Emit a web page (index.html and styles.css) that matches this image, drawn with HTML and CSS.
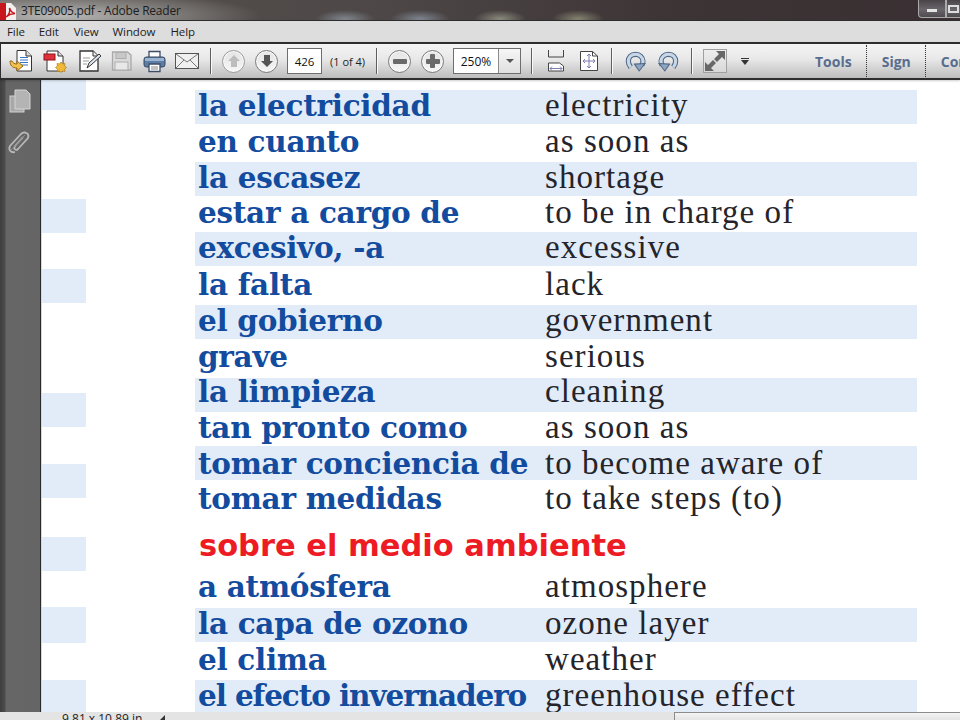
FILE: index.html
```html
<!DOCTYPE html>
<html lang="en">
<head>
<meta charset="utf-8">
<title>3TE09005.pdf - Adobe Reader</title>
<link rel="stylesheet" href="styles.css">
</head>
<body>
<div class="app">
  <header class="titlebar">
    <svg class="pdf-logo" width="16" height="18" viewBox="0 0 16 18"><path d="M0 1h11l5 5v12H0z" fill="#f4f0ee"/><path d="M0 1h6v17H0z" fill="#c8141c"/><path d="M6 15c3-2 4-6 3.500-9 1 3 2.500 5 5.500 5.500-3 0-6 1-9 3.500z" fill="none" stroke="#c8141c" stroke-width="1.400"/></svg>
    <span class="title-text">3TE09005.pdf - Adobe Reader</span>
    <div class="winbtns">
      <span class="winbtn"><i class="min-glyph"></i></span>
      <span class="winbtn"><i class="max-glyph"></i></span>
    </div>
  </header>
  <nav class="menubar">
    <span class="m-file">File</span><span class="m-edit">Edit</span><span class="m-view">View</span><span class="m-window">Window</span><span class="m-help">Help</span>
  </nav>
  <div class="toolbar">
    <svg class="ico i-open" width="24" height="24" viewBox="0 0 24 24"><path d="M8 1.500h9l5.500 5.500v15H8z" fill="#fff" stroke="#333"/><path d="M17 1.500V7h5.500" fill="#ddd" stroke="#333"/><path d="M11 8.500h8M11 11h8M11 13.500h8M11 16h8" stroke="#3a74c4" stroke-width="1.200"/><path d="M1 12c0 4 2 7 7 7v3l6-5-6-5v3c-3 0-4-1-5-3z" fill="#f2c24e" stroke="#9a6a10"/></svg>
    <svg class="ico i-create" width="24" height="24" viewBox="0 0 24 24"><path d="M4 2h11l5 5v15H4z" fill="#fff" stroke="#333"/><path d="M15 2v5h5" fill="#ddd" stroke="#333"/><rect x="1" y="5" width="11" height="6" fill="#e0303a" stroke="#8e1218"/><path d="M18 13l1.500 2 2.500-.5-.5 2.500 2 1.500-2 1.500.5 2.500-2.500-.5-1.500 1.500-1.500-1.500-2.500.5.500-2.500-2-1.500 2-1.500-.5-2.500 2.500.5z" fill="#f0b93a" stroke="#b07d12" stroke-width=".7"/></svg>
    <svg class="ico i-edit" width="24" height="24" viewBox="0 0 24 24"><path d="M2 2h13l5 5v15H2z" fill="#fff" stroke="#333" stroke-width="1.300"/><path d="M15 2v5h5" fill="#eee" stroke="#333"/><path d="M5 9h7M5 12h6M5 15h4" stroke="#999"/><path d="M9 19l2-5 10-9 2 2-10 9z" fill="#dfe6f2" stroke="#333"/></svg>
    <svg class="ico i-save" width="21" height="22" viewBox="0 0 21 22"><path d="M1.500 2h15l3.500 3v15H1.500z" fill="#dadada" stroke="#a9a9a9" stroke-width="1.300"/><rect x="5" y="2.500" width="10" height="6" fill="#c8c8c8" stroke="#adadad"/><rect x="4" y="12" width="13" height="8" fill="#e8e8e8" stroke="#adadad"/></svg>
    <svg class="ico i-print" width="23" height="23" viewBox="0 0 23 23"><path d="M6 1.500h11v7H6z" fill="#fff" stroke="#3c4e66" stroke-width="1.300"/><rect x="1" y="7" width="21" height="10" rx="2.500" fill="#5d7da6" stroke="#34465c"/><rect x="2" y="8" width="19" height="3" fill="#9bb4d1"/><path d="M6 14h11v7.500H6z" fill="#fff" stroke="#3c4e66" stroke-width="1.300"/><path d="M8 17h7M8 19h7" stroke="#888"/></svg>
    <svg class="ico i-mail" width="24" height="16" viewBox="0 0 24 16"><rect x=".5" y=".5" width="23" height="15" fill="#f0f0f0" stroke="#555"/><path d="M1 1l11 8 11-8M1 15l8-8M23 15l-8-8" fill="none" stroke="#777"/></svg>
    <i class="sep s-a"></i>
    <span class="circle c-up"><svg width="14" height="14" viewBox="0 0 14 14"><path d="M7 1l6 6H10v6H4V7H1z" fill="#bdbdbd"/></svg></span>
    <span class="circle c-down"><svg width="14" height="14" viewBox="0 0 14 14"><path d="M7 13L1 7h3V1h6v6h3z" fill="#555"/></svg></span>
    <span class="page-input">426</span>
    <span class="page-of">(1 of 4)</span>
    <i class="sep s-b"></i>
    <span class="circle c-minus"><i class="bar-h"></i></span>
    <span class="circle c-plus"><i class="bar-h"></i><i class="bar-v"></i></span>
    <div class="zoom-box"><span class="zoom-val">250%</span><span class="zoom-drop"><i class="tri"></i></span></div>
    <i class="sep s-c"></i>
    <svg class="ico i-fitw" width="18" height="22" viewBox="0 0 18 22"><path d="M1.500 0v7h15V0" fill="none" stroke="#444"/><path d="M1.500 21v-8h11l4 3v5z" fill="#fff" stroke="#444"/><path d="M3 18.500h12M3 18.500l2-2M3 18.500l2 2M15 18.500l-2-2M15 18.500l-2 2" stroke="#7a7fb0" fill="none"/></svg>
    <svg class="ico i-fitp" width="18" height="20" viewBox="0 0 18 20"><path d="M.5.500h12l5 4.500v14.500H.5z" fill="#fff" stroke="#444"/><path d="M12.500.500V5h5" fill="none" stroke="#444"/><path d="M9 3v14M3 10h12M9 3L7 5M9 3l2 2M9 17l-2-2M9 17l2-2M3 10l2-2M3 10l2 2M15 10l-2-2M15 10l-2 2" stroke="#7a7fb0" fill="none"/></svg>
    <i class="sep s-d"></i>
    <svg class="ico i-rot1" width="21" height="21" viewBox="0 0 20 20"><path d="M5.500 15.500C2.500 12 2.500 7.500 5 5s7.500-2.500 10 0 2.500 6 1 8.500" fill="none" stroke="#4f6786" stroke-width="5"/><path d="M5.500 15.500C2.500 12 2.500 7.500 5 5s7.500-2.500 10 0 2.500 6 1 8.500" fill="none" stroke="#c8d7e8" stroke-width="3"/><path d="M9 12.500l10-.5-5.500 7z" fill="#8ea6c3" stroke="#4f6786"/></svg>
    <svg class="ico i-rot2" width="21" height="21" viewBox="0 0 20 20"><path d="M14.500 15.500C17.500 12 17.500 7.500 15 5S7.500 2.500 5 5s-2.500 6-1 8.500" fill="none" stroke="#4f6786" stroke-width="5"/><path d="M14.500 15.500C17.500 12 17.500 7.500 15 5S7.500 2.500 5 5s-2.500 6-1 8.500" fill="none" stroke="#c8d7e8" stroke-width="3"/><path d="M11 12.500L1 12l5.500 7z" fill="#8ea6c3" stroke="#4f6786"/></svg>
    <i class="sep s-e"></i>
    <span class="expand"><svg width="22" height="22" viewBox="0 0 22 22"><path d="M12 1h9v9l-3-3-5 5-3-3 5-5zM10 21H1v-9l3 3 5-5 3 3-5 5z" fill="#686868"/></svg></span>
    <span class="more"><i class="more-bar"></i><i class="tri-dark"></i></span>
    <span class="tab t-tools">Tools</span><i class="dots"></i>
    <span class="tab t-sign">Sign</span><i class="dots"></i>
    <span class="tab t-co">Comment</span>
  </div>
  <div class="workspace">
    <aside class="sidebar">
      <svg class="side-pages" width="22" height="24" viewBox="0 0 22 24"><rect x="1" y="7" width="14" height="16" fill="#a8a8a8" stroke="#d0d0d0"/><path d="M6 1h11l4 4v15H6z" fill="#b4b4b4" stroke="#d4d4d4"/></svg>
      <svg class="side-clip" width="24" height="24" viewBox="0 0 24 24"><path d="M8 22c-4 1-7-2-5-6L14 4c3-3 9-1 7 4L11 19c-2 2-5 0-3-3l8-9" fill="none" stroke="#b8b8b8" stroke-width="1.800"/><path d="M4 20L18 5" fill="none" stroke="#8c8c8c" stroke-width="1"/></svg>
    </aside>
    <main class="page">
      <div class="gutter"><i></i><i></i><i></i><i></i><i></i><i></i><i></i><i></i></div>
      <div class="sheet">
        <div class="row r36"><b>debido a</b><span>due to</span></div>
        <div class="row band gap2"><b>la electricidad</b><span>electricity</span></div>
        <div class="row r36"><b>en cuanto</b><span>as soon as</span></div>
        <div class="row band gap1"><b>la escasez</b><span>shortage</span></div>
        <div class="row r35"><b>estar a cargo de</b><span>to be in charge of</span></div>
        <div class="row band gap3"><b>excesivo, -a</b><span>excessive</span></div>
        <div class="row r36"><b>la falta</b><span>lack</span></div>
        <div class="row band gap2"><b>el gobierno</b><span>government</span></div>
        <div class="row r37"><b>grave</b><span>serious</span></div>
        <div class="row band up"><b>la limpieza</b><span>cleaning</span></div>
        <div class="row r34"><b>tan pronto como</b><span>as soon as</span></div>
        <div class="row band gap3 down"><b>tomar conciencia de</b><span>to become aware of</span></div>
        <div class="row r36"><b>tomar medidas</b><span>to take steps (to)</span></div>
        <h2 class="section">sobre el medio ambiente</h2>
        <div class="row r37"><b>a atmósfera</b><span>atmosphere</span></div>
        <div class="row band gap2"><b>la capa de ozono</b><span>ozone layer</span></div>
        <div class="row r36"><b>el clima</b><span>weather</span></div>
        <div class="row band tight"><b>el efecto invernadero</b><span>greenhouse effect</span></div>
      </div>
    </main>
  </div>
  <footer class="status">
    <span class="dims">9.81 x 10.89 in</span>
    <i class="status-tri"></i>
    <div class="hscroll"><span class="grip">|||</span></div>
  </footer>
</div>
</body>
</html>
```
FILE: styles.css
```css
* { box-sizing: border-box; }
html, body { margin: 0; padding: 0; background: #fff; }
.app { width: 960px; height: 720px; display: flex; flex-direction: column; overflow: hidden; font-family: "Open Sans", "Noto Sans", sans-serif; }
i { display: block; font-style: normal; }

.titlebar {
  height: 21px; flex: none; display: flex; align-items: center; position: relative;
  background:
    radial-gradient(ellipse 30px 9px at 345px 19px, #7f858c 0, rgba(127,133,140,0) 100%),
    radial-gradient(ellipse 30px 9px at 420px 19px, #7d848e 0, rgba(125,132,142,0) 100%),
    radial-gradient(ellipse 26px 9px at 500px 19px, #8a8a7c 0, rgba(138,138,124,0) 100%),
    radial-gradient(ellipse 26px 9px at 578px 19px, #85836f 0, rgba(133,131,111,0) 100%),
    radial-gradient(ellipse 200px 26px at 60px 16px, #b8b8b6 0, rgba(184,184,182,0) 100%),
    linear-gradient(90deg, #57534f 0, #4d4747 40%, #3d3436 70%, #3a3033 100%);
  border-bottom: 1px solid #2d2d2d;
}
.pdf-logo { margin: 2px 0 0 0; flex: none; }
.title-text { margin-left: 5px; font-size: 12px; letter-spacing: -.22px; color: #1d1d1d; }
.winbtns { margin-left: auto; align-self: flex-start; display: flex; width: 42px; height: 18px; flex: none; padding-left: 0; }
.winbtn { width: 28px; flex: none; height: 18px; display: flex; align-items: center; justify-content: center; border: 1px solid #aaa; border-top: 0; background: linear-gradient(#4a4448, #6a666c 55%, #4e4a50); }
.winbtn:first-child { border-radius: 0 0 0 4px; }
.min-glyph { width: 10px; height: 3px; background: #e4e4e4; margin-top: 3px; }
.max-glyph { width: 11px; height: 8px; border: 2px solid #ddd; margin-left: -14px; }

.menubar { height: 21px; flex: none; background: #dddddd; display: flex; align-items: center; font-size: 11.500px; letter-spacing: -.1px; color: #1c1c1c; }
.m-file { margin-left: 7px; }
.m-edit { margin-left: 14px; }
.m-view { margin-left: 15px; }
.m-window { margin-left: 14px; }
.m-help { margin-left: 15px; }

.toolbar {
  height: 38px; flex: none; display: flex; align-items: center; overflow: hidden;
  background: linear-gradient(#f4f4f4, #e8e8e8 45%, #bdbdbd);
  border: 1px solid #2e2e2e; border-width: 2px 0 2px 1px;
  box-shadow: 0 1px 2px rgba(0,0,0,.2);
  position: relative; z-index: 2;
}
.ico { flex: none; }
.i-open { margin-left: 8px; }
.i-create { margin-left: 10px; }
.i-edit { margin-left: 11px; }
.i-save { margin-left: 9px; }
.i-print { margin-left: 11px; }
.i-mail { margin-left: 9px; }
.sep { width: 2px; height: 26px; flex: none; background: linear-gradient(90deg, #5e5e5e 50%, #fafafa 50%); }
.s-a { margin-left: 11px; }
.circle { width: 23px; height: 23px; flex: none; border-radius: 50%; border: 1px solid #9c9c9c; background: linear-gradient(#e4e4e4, #f6f6f6); display: flex; align-items: center; justify-content: center; position: relative; box-shadow: inset 0 0 0 1px #fafafa; }
.c-up { margin-left: 10px; }
.c-down { margin-left: 10px; border-color: #7a7a7a; }
.page-input { width: 35px; height: 26px; flex: none; margin-left: 9px; background: #fff; border: 1px solid #6e6e6e; font-size: 11.500px; display: flex; align-items: center; justify-content: center; color: #111; }
.page-of { margin-left: 8px; width: 38px; flex: none; font-size: 11px; white-space: nowrap; color: #222; }
.s-b { margin-left: 8px; }
.c-minus { margin-left: 10px; border-color: #7a7a7a; }
.c-plus { margin-left: 10px; border-color: #7a7a7a; }
.bar-h { width: 14px; height: 5px; background: #6a6a6a; border-radius: 1px; }
.bar-v { width: 5px; height: 14px; background: #6a6a6a; border-radius: 1px; position: absolute; left: 8px; top: 3.500px; }
.zoom-box { margin-left: 9px; width: 68px; height: 26px; flex: none; display: flex; background: #fff; border: 1px solid #6e6e6e; font-size: 12px; color: #111; }
.zoom-val { width: 44px; display: flex; align-items: center; justify-content: center; }
.zoom-drop { flex: 1; border-left: 1px solid #8a8a8a; background: linear-gradient(#f6f6f6, #e0e0e0); display: flex; align-items: center; justify-content: center; }
.tri { border: 4px solid transparent; border-top: 4px solid #555; border-bottom: 0; width: 0; height: 0; }
.s-c { margin-left: 10px; }
.i-fitw { margin-left: 14px; }
.i-fitp { margin-left: 15px; }
.s-d { margin-left: 13px; }
.i-rot1 { margin-left: 12px; }
.i-rot2 { margin-left: 12px; }
.s-e { margin-left: 12px; }
.expand { margin-left: 10px; width: 24px; height: 24px; flex: none; border: 1px solid #a0a0a0; background: linear-gradient(#eee, #d8d8d8); display: flex; align-items: center; justify-content: center; }
.more { margin-left: 14px; width: 8px; flex: none; display: flex; flex-direction: column; align-items: center; gap: 1px; }
.more-bar { width: 8px; height: 1px; background: #333; }
.tri-dark { border: 4px solid transparent; border-top: 5px solid #333; border-bottom: 0; width: 0; height: 0; }
.tab { font-family: "Open Sans", sans-serif; font-weight: 700; font-size: 14px; color: #586d8e; flex: none; white-space: nowrap; }
.t-tools { margin-left: 66px; }
.dots { height: 32px; flex: none; margin-left: 14px; border-left: 1px dotted #333; }
.t-sign { margin-left: 15px; }
.t-co { margin-left: 15px; }

.workspace { flex: 1; min-height: 0; display: flex; overflow: hidden; }
.sidebar { width: 42px; flex: none; background: linear-gradient(90deg, #3f3f3f 0, #4c4c4c 5px, #666 6px, #656565 40px, #2a2a2a 40px, #2a2a2a 41px, #d8d8d8 41px); display: flex; flex-direction: column; align-items: flex-start; }
.side-pages { margin: 9px 0 0 9px; }
.side-clip { margin: 17px 0 0 7px; }
.page { flex: 1; min-width: 0; display: flex; overflow: hidden; background: #fff; }
.gutter { width: 44px; flex: none; }
.gutter i { height: 34px; background: #e1ecf8; }
.gutter i:nth-child(1) { height: 30px; margin-top: 0; }
.gutter i:nth-child(2) { margin-top: 89px; }
.gutter i:nth-child(3) { margin-top: 36px; }
.gutter i:nth-child(4) { margin-top: 90px; }
.gutter i:nth-child(5) { margin-top: 37px; }
.gutter i:nth-child(6) { margin-top: 39px; }
.gutter i:nth-child(7) { margin-top: 36px; height: 36px; }
.gutter i:nth-child(8) { margin-top: 37px; }

.sheet { margin: -26px 0 0 109px; width: 722px; flex: none; }
.row { display: grid; grid-template-columns: 347px 1fr; align-items: baseline; padding: 0 0 0 3px; font-family: "Liberation Serif", serif; font-size: 33px; line-height: 30px; }
.row b { font-family: "DejaVu Serif", serif; font-size: 29.500px; font-weight: 700; color: #134c9e; letter-spacing: -.3px; white-space: nowrap; }
.row span { color: #24242a; letter-spacing: 1.05px; white-space: nowrap; }
.tight b { letter-spacing: -1.1px; }
.band { height: 34px; background: #e1ecf8; }
.gap1 { margin-bottom: 1px; }
.gap2 { margin-bottom: 2px; }
.gap3 { margin-bottom: 3px; }
.up { line-height: 26px; }
.down { line-height: 34px; }
.r34 { height: 34px; }
.r35 { height: 35px; }
.r36 { height: 36px; }
.r37 { height: 37px; }
.section { margin: 0; height: 52px; padding: 9px 0 0 4px; font-family: "DejaVu Sans", sans-serif; font-weight: 700; font-size: 30.500px; line-height: 36px; color: #ed1c24; white-space: nowrap; }

.status { height: 8px; flex: none; display: flex; background: #e4e4e4; overflow: hidden; position: relative; padding-left: 42px; font-size: 12px; line-height: 14px; }
.dims { margin-left: 20px; width: 90px; flex: none; color: #222; }
.status-tri { flex: none; margin: 3px 0 0 8px; border: 5px solid transparent; border-right: 5px solid #333; border-left: 0; width: 0; height: 0; }
.hscroll { margin-left: auto; width: 286px; flex: none; background: linear-gradient(#f4f4f4, #e4e4e4); border: 1px solid #8c8c8c; border-bottom: 0; border-right: 0; text-align: center; font-size: 8px; line-height: 14px; color: #444; padding-top: 2px; }
.grip { letter-spacing: 0; }
```
